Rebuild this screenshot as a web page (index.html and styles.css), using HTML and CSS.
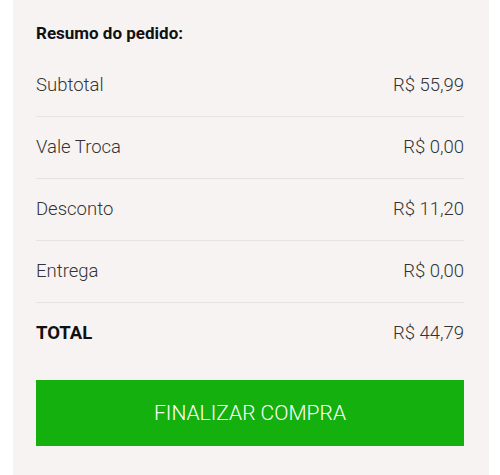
FILE: index.html
```html
<!DOCTYPE html>
<html lang="pt-BR">
<head>
    <meta charset="UTF-8">
    <meta name="viewport" content="width=device-width, initial-scale=1.0">
    <title>Resumo do pedido</title>
    <link rel="stylesheet" href="styles.css">
</head>
<body>
    <div class="summary">
        <h2 class="summary-title">Resumo do pedido:</h2>
        <ul class="summary-list">
            <li><span>Subtotal</span><span>R$ 55,99</span></li>
            <li><span>Vale Troca</span><span>R$ 0,00</span></li>
            <li><span>Desconto</span><span>R$ 11,20</span></li>
            <li><span>Entrega</span><span>R$ 0,00</span></li>
            <li class="total"><span>TOTAL</span><span>R$ 44,79</span></li>
        </ul>
        <button class="btn-finish">FINALIZAR COMPRA</button>
    </div>
</body>
</html>
```

FILE: styles.css
```css
body{
    margin: 0;
    background-color: #ffffff;
    font-family: Roboto, "Liberation Sans", sans-serif;
}
.summary{
    margin: 0 11px 0 13px;
    padding: 22px 25px 40px 23px;
    background-color: #f7f3f3;
}
.summary-title{
    margin: 0 0 11px;
    font-size: 17px;
    line-height: 22px;
    font-weight: 700;
    color: #111;
}
.summary-list{
    list-style: none;
    margin: 0;
    padding: 0;
}
.summary-list li{
    display: flex;
    justify-content: space-between;
    height: 61px;
    line-height: 61px;
    border-bottom: 1px solid #e6e2e2;
    font-size: 18.5px;
    font-weight: 300;
    color: #333;
}
.summary-list li.total{
    height: 60px;
    line-height: 60px;
    border-bottom: none;
}
.summary-list li.total span:first-child{
    font-weight: 700;
    color: #111;
}
.btn-finish{
    display: block;
    width: 100%;
    height: 66px;
    margin-top: 17px;
    border: none;
    background-color: #14b00e;
    color: #fff;
    font-family: Roboto, "Liberation Sans", sans-serif;
    font-size: 21px;
    font-weight: 300;
}
```
